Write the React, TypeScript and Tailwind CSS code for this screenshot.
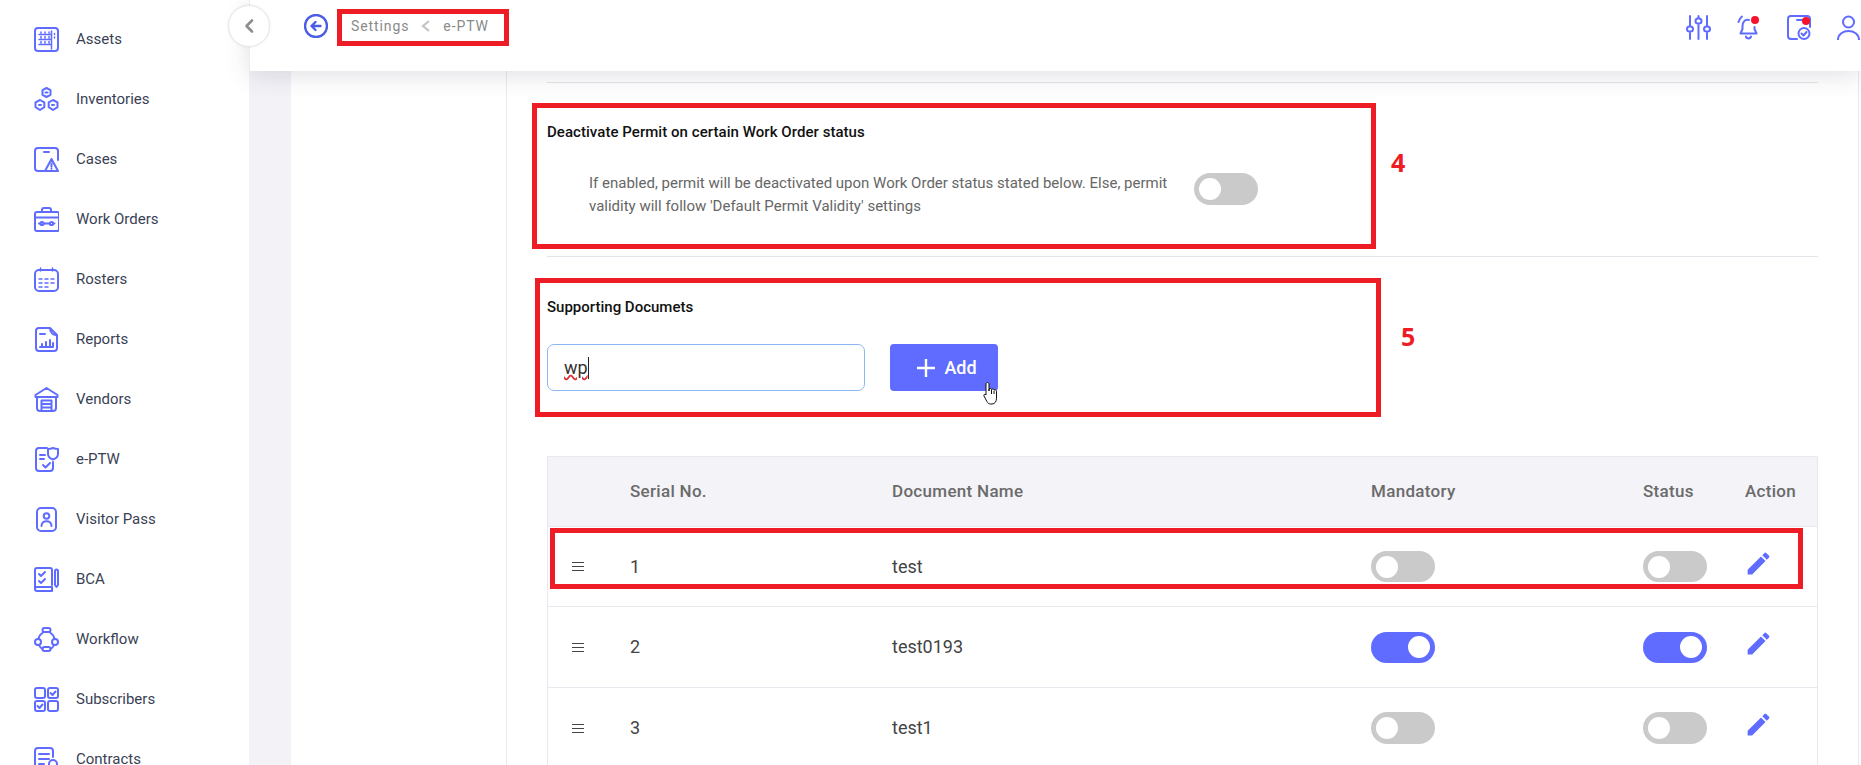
import React from 'react';

const BLUE = '#5f6cff';

function Ic({ children, size = 25 }: { children: React.ReactNode; size?: number }) {
  return (
    <svg width={size} height={size} viewBox="0 0 25 25" fill="none" stroke={BLUE} strokeWidth={2} strokeLinecap="round" strokeLinejoin="round" className="shrink-0">
      {children}
    </svg>
  );
}

const NAV: { label: string; icon: React.ReactNode }[] = [
  {
    label: 'Assets',
    icon: (
      <Ic>
        <rect x="1" y="1" width="23" height="23" rx="3" />
        <path d="M5 7.500h12M5 12.500h12M5 17.500h12M7 5v1M11 5v1M15 5v1M7 9.500v1.500M11 9.500v1.500M15 9.500v1.500M7 14.500v1.500M11 14.500v1.500M15 14.500v1.500M17.500 4v18M20.500 6.500v1M20.500 10v1" strokeWidth="1.500" />
      </Ic>
    ),
  },
  {
    label: 'Inventories',
    icon: (
      <Ic>
        <path d="M12.500 1l4 2.200v4.600l-4 2.200-4-2.200V3.200zM6 13l4.300 2.400v4.800L6 23l-4.500-2.800v-4.800zM19 13l4.500 2.400v4.800L19 23l-4.300-2.800v-4.800z" />
        <path d="M11.500 5.500h2M5 18h2M18 18h2" />
      </Ic>
    ),
  },
  {
    label: 'Cases',
    icon: (
      <Ic>
        <path d="M10 24H4a3 3 0 01-3-3V4a3 3 0 013-3h17a3 3 0 013 3v9M10 5h5" />
        <path d="M17.500 12l6.500 12H11zM17.500 16.500v3M17.500 21.500v.2" />
      </Ic>
    ),
  },
  {
    label: 'Work Orders',
    icon: (
      <Ic>
        <rect x="1" y="5" width="24" height="19" rx="2" />
        <path d="M8 5V3a2 2 0 012-2h5a2 2 0 012 2v2M1 10.500h24M5 16.500h1.500M9.500 16.500h6M19 16.500h1.500" />
        <circle cx="8" cy="16.500" r="1.600" />
        <circle cx="17.500" cy="16.500" r="1.600" />
      </Ic>
    ),
  },
  {
    label: 'Rosters',
    icon: (
      <Ic>
        <rect x="1" y="3" width="23" height="21" rx="4" />
        <path d="M6.500 1v3M18.500 1v3M5 12h3M11 12h3M17 12h3M5 16h3M11 16h3M17 16h3M5 20h3M11 20h3" strokeWidth="1.500" />
      </Ic>
    ),
  },
  {
    label: 'Reports',
    icon: (
      <Ic>
        <path d="M16 1H5a3 3 0 00-3 3v17a3 3 0 003 3h15a3 3 0 003-3V8M16 1l7 7c-4 .5-7-2.500-7-7zM6 7h5M6 20h13M8 20v-3M12 20v-5M16 20v-7M19 20v-4" />
      </Ic>
    ),
  },
  {
    label: 'Vendors',
    icon: (
      <Ic>
        <path d="M1.500 8L12.500 1l11 7v2h-22zM3 10v11a3 3 0 003 3h13a3 3 0 003-3V10M7.500 24V13.500h10V24M7.500 17h10M7.500 20.500h10" />
      </Ic>
    ),
  },
  {
    label: 'e-PTW',
    icon: (
      <Ic>
        <path d="M13 1H5a3 3 0 00-3 3v17a3 3 0 003 3h11a3 3 0 003-3v-6M6 8h5M6 12h4M9 18l2.500 2.500L16 16" />
        <path d="M19 1c2 .8 4 1 5 1v5c0 2.500-2 4.500-5 5.500-3-1-5-3-5-5.500V2c1 0 3-.2 5-1z" />
      </Ic>
    ),
  },
  {
    label: 'Visitor Pass',
    icon: (
      <Ic>
        <rect x="3" y="1" width="19" height="23" rx="4" />
        <circle cx="12.500" cy="9" r="2.800" />
        <path d="M7.500 19c0-6.500 10-6.500 10 0" />
      </Ic>
    ),
  },
  {
    label: 'BCA',
    icon: (
      <Ic>
        <path d="M18 18V3a2 2 0 00-2-2H3a2 2 0 00-2 2v19M1 22a2 2 0 012-2h15v4H3a2 2 0 01-2-2zM5 7l2 2 4-4M5 14l2 2 4-4M21 7v11l1.500 2 1.500-2V4a1.500 1.500 0 00-3 0z" />
      </Ic>
    ),
  },
  {
    label: 'Workflow',
    icon: (
      <Ic>
        <rect x="8.500" y="1" width="8" height="4" rx="2" />
        <circle cx="4" cy="15" r="3" />
        <circle cx="21" cy="15" r="3" />
        <rect x="8.500" y="20" width="8" height="4" rx="2" />
        <path d="M9 5.500C6.500 7 5 9 4.500 12M16 5.500c2.500 1.500 4 3.500 4.500 6.500M5 18c.8 2 2 3 3.500 4M20 18c-.8 2-2 3-3.500 4" />
      </Ic>
    ),
  },
  {
    label: 'Subscribers',
    icon: (
      <Ic>
        <rect x="1" y="1" width="10" height="10" rx="2" />
        <rect x="14" y="1" width="10" height="10" rx="2" />
        <rect x="1" y="14" width="10" height="10" rx="2" />
        <rect x="14" y="14" width="10" height="10" rx="2" />
        <path d="M16.500 6l2 2 3-3.500M3.500 19l2 2 3-3.500" />
      </Ic>
    ),
  },
  {
    label: 'Contracts',
    icon: (
      <Ic>
        <path d="M11 24H4a3 3 0 01-3-3V4a3 3 0 013-3h12a3 3 0 013 3v6M5 7h10M5 12h10M5 17h5" />
        <rect x="15" y="13" width="8" height="11" rx="4" />
      </Ic>
    ),
  },
];

function Toggle({ on = false, large = false }: { on?: boolean; large?: boolean }) {
  return (
    <div
      className={`flex w-16 items-center rounded-full px-[5px] ${large ? 'h-8' : 'h-[31px]'} ${on ? 'justify-end bg-[#5f6cff]' : 'justify-start bg-[#cacaca]'}`}
    >
      <div className="h-[22px] w-[22px] rounded-full bg-white" />
    </div>
  );
}

function Pencil() {
  return (
    <svg width="29" height="29" viewBox="0 0 24 24" fill={BLUE} className="-mt-[7px] -ml-px">
      <path d="M3 17.250V21h3.750L17.810 9.940l-3.750-3.750L3 17.250zM20.710 7.040a1 1 0 000-1.410l-2.340-2.340a1 1 0 00-1.410 0l-1.830 1.830 3.750 3.750 1.830-1.830z" />
    </svg>
  );
}

function Handle() {
  return (
    <div className="flex w-3 flex-col gap-[3px]">
      <div className="h-px bg-[#444]" />
      <div className="h-px bg-[#444]" />
      <div className="h-px bg-[#444]" />
    </div>
  );
}

const ROWS = [
  { no: 1, name: 'test', on: false, h: 'h-[80px]', big: false },
  { no: 2, name: 'test0193', on: true, h: 'h-[81px]', big: false },
  { no: 3, name: 'test1', on: false, h: 'h-[81px]', big: true },
];

function Header() {
  return (
    <header className="relative z-10 flex h-[71px] shrink-0 items-start justify-between border-l border-[#ececf2] bg-white pl-[54px] shadow-[0_4px_24px_rgba(60,60,90,0.16)]">
      <div className="flex items-center pt-[14px]">
        <svg width="24" height="24" viewBox="0 0 24 24" fill="none" stroke="#4a5de6" strokeWidth="2.400" strokeLinecap="round" strokeLinejoin="round">
          <circle cx="12" cy="12" r="11" />
          <path d="M7.500 12h9M11.500 8l-4 4 4 4" />
        </svg>
        <div className="ml-[10px] flex items-center px-[13px] text-sm tracking-[0.9px] text-[#8a8a8a]">
          <span>Settings</span>
          <svg width="12" height="14" viewBox="0 0 12 14" fill="none" stroke="#c4c4c4" strokeWidth="2.200" className="mx-[11px]">
            <path d="M9 2L3 7l6 5" />
          </svg>
          <span>e-PTW</span>
        </div>
      </div>
      <div className="flex items-start gap-[25px] pt-[15px]">
        <Ic>
          <path d="M4 1v10M4 18v6M12.500 1v2M12.500 10v14M21 1v10M21 18v6" />
          <rect x="1" y="11.500" width="6" height="5" rx="2.500" />
          <rect x="9.500" y="3.500" width="6" height="5" rx="2.500" />
          <rect x="18" y="11.500" width="6" height="5" rx="2.500" />
        </Ic>
        <div className="relative">
          <Ic>
            <path d="M13 5c-4.500-1-6.500 2.500-6.500 6v3l-2 4.500h16L18.500 14v-2M10 21.500c.5 2.500 4.500 2.500 5 0M6 1.500C4 3 3 5 2.500 7" />
          </Ic>
          <div className="absolute top-[1px] left-[15px] h-2 w-2 rounded-full bg-[#f5142c]" />
        </div>
        <div className="relative">
          <Ic>
            <path d="M11 24H5a3 3 0 01-3-3V4a3 3 0 013-3h16a3 3 0 013 3v8M11 5h5" />
            <circle cx="18" cy="18.500" r="5.500" />
            <path d="M15.500 18.500l2 2 3-3.500" />
          </Ic>
          <div className="absolute top-[2px] left-[16px] h-2 w-2 rounded-full bg-[#f5142c]" />
        </div>
        <Ic>
          <circle cx="12.500" cy="7" r="5.500" />
          <path d="M2 25c0-12 21-12 21 0" />
        </Ic>
      </div>
    </header>
  );
}

function Cursor() {
  return (
    <svg width="18" height="24" viewBox="0 0 18 24" fill="#fff" stroke="#111" strokeWidth="1" strokeLinejoin="round">
      <path d="M4.500 1.500c1 0 1.500.7 1.500 1.500v7l0-2c1-1 2.500-.5 2.500.5 1-1 2.500-.5 2.500.7 1-.8 2.500-.2 2.500 1v7c0 3-1.500 5.800-4.500 5.800H7.500c-2 0-2.800-1-3.500-2.300L1 15c-.7-1.300.8-2.300 1.800-1.300L3 14V3c0-.8.6-1.500 1.500-1.500z" />
      <path d="M8.500 9v4M11 10v3" fill="none" />
    </svg>
  );
}

export default function App() {
  return (
    <div className="relative flex h-screen w-full overflow-hidden bg-white font-['Roboto',sans-serif]">
      <aside className="flex h-full w-[249px] shrink-0 flex-col bg-white pt-[10px] pl-[34px]">
        {NAV.map((n) => (
          <div key={n.label} className="flex h-[60px] shrink-0 items-center gap-[17px]">
            <div className="-mt-px">{n.icon}</div>
            <span className="-mt-px text-[15px] text-[#3a3f55]">{n.label}</span>
          </div>
        ))}
      </aside>

      <div className="flex min-w-0 flex-1 flex-col">
        <Header />
        <main className="flex min-h-0 flex-1">
          <div className="w-[42px] shrink-0 bg-[#f2f2f7]" />
          <div className="w-[215px] shrink-0 bg-white" />
          <div className="w-[1353px] shrink-0 border-x border-[#e8e8ee] bg-white px-10 pt-[11px]">
            <div className="border-t border-[#e4e4ea] pt-[39px]">
              <h3 className="text-[15px] leading-5 font-medium tracking-[0.05px] text-[#111]">Deactivate Permit on certain Work Order status</h3>
              <div className="mt-[30px] flex items-start pl-[42px]">
                <p className="w-[600px] text-[15px] leading-[23px] text-[#666]">
                  If enabled, permit will be deactivated upon Work Order status stated below. Else, permit validity will follow 'Default Permit Validity' settings
                </p>
                <div className="mt-px ml-[5px]">
                  <Toggle large />
                </div>
              </div>
            </div>

            <div className="mt-[38px] border-t border-[#e4e4ea] pt-[40px]">
              <h3 className="text-[15px] leading-5 font-medium text-[#111]">Supporting Documets</h3>
              <div className="mt-[27px] flex items-center gap-[25px]">
                <div className="flex h-[47px] w-[318px] items-center rounded-[7px] border border-[#8ab8f5] pl-4 text-lg text-[#333]">
                  <span className="underline decoration-[#e0303a] decoration-wavy">wp</span>
                  <span className="h-[22px] w-px bg-[#222]" />
                </div>
                <button className="flex h-[47px] w-[108px] items-center justify-center gap-[9px] rounded-[4px] bg-[#5f6cff] pl-[6px] text-lg font-medium text-white">
                  <svg width="18" height="18" viewBox="0 0 18 18" fill="none" stroke="#fff" strokeWidth="2.400">
                    <path d="M9 0v18M0 9h18" />
                  </svg>
                  Add
                </button>
              </div>
            </div>

            <div className="mt-[65px] border-x border-t border-[#e8e8ee]">
              <div className="grid h-[70px] grid-cols-[82px_262px_479px_272px_102px_74px] items-center border-b border-[#e8e8ee] bg-[#f3f3f8] text-[17px] font-medium tracking-[0.3px] text-[#6b6b6b]">
                <span />
                <span>Serial No.</span>
                <span>Document Name</span>
                <span>Mandatory</span>
                <span>Status</span>
                <span>Action</span>
              </div>
              {ROWS.map((r) => (
                <div key={r.no} className={`grid grid-cols-[82px_262px_479px_272px_102px_74px] items-center border-b border-[#e8e8ee] text-lg text-[#444] ${r.h}`}>
                  <div className="pl-[24px]">
                    <Handle />
                  </div>
                  <span>{r.no}</span>
                  <span>{r.name}</span>
                  <Toggle on={r.on} large={r.big} />
                  <Toggle on={r.on} large={r.big} />
                  <Pencil />
                </div>
              ))}
            </div>
          </div>
        </main>
      </div>

      {/* collapse button sits over the sidebar edge */}
      <div className="absolute top-[5px] left-[228px] z-20 flex h-[42px] w-[42px] items-center justify-center rounded-full border border-[#e6e6ec] bg-white shadow-[0_0_3px_rgba(0,0,0,0.08)]">
        <svg width="12" height="16" viewBox="0 0 12 16" fill="none" stroke="#8e8e8e" strokeWidth="2.600" strokeLinecap="round" strokeLinejoin="round">
          <path d="M9 2.500L3.500 8 9 13.500" />
        </svg>
      </div>

      {/* red annotations drawn on the screenshot */}
      <div className="absolute top-[9px] left-[337px] z-30 h-[37px] w-[172px] border-[5px] border-[#ee1c25]" />
      <div className="absolute top-[103px] left-[532px] z-30 h-[146px] w-[844px] border-[5px] border-[#ee1c25]" />
      <div className="absolute top-[278px] left-[535px] z-30 h-[139px] w-[846px] border-[5px] border-[#ee1c25]" />
      <div className="absolute top-[528px] left-[550px] z-30 h-[61px] w-[1253px] border-[5px] border-[#ee1c25]" />
      <span className="absolute top-[146px] left-[1391px] z-30 font-['Open_Sans',sans-serif] text-[25px] leading-8 font-bold text-[#ee1c25]">4</span>
      <span className="absolute top-[320px] left-[1401px] z-30 font-['Open_Sans',sans-serif] text-[25px] leading-8 font-bold text-[#ee1c25]">5</span>
      <div className="absolute top-[381px] left-[983px] z-30">
        <Cursor />
      </div>
    </div>
  );
}
